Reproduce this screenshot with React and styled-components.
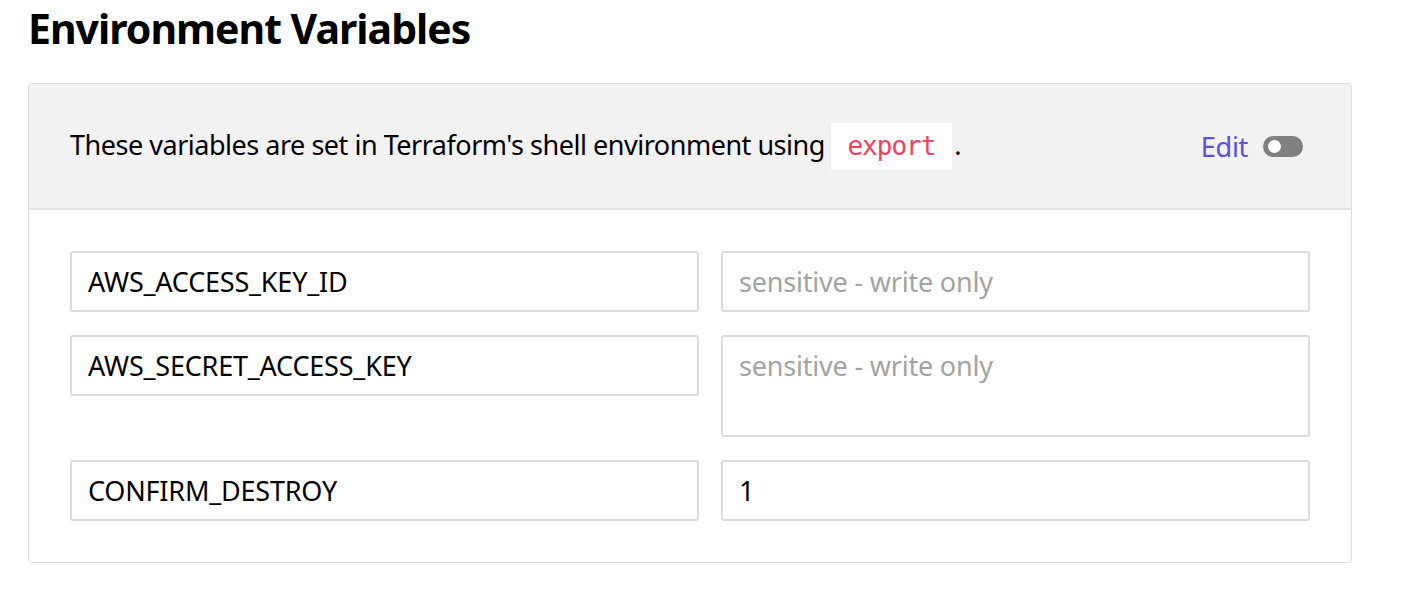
import React from "react";
import styled, { createGlobalStyle } from "styled-components";

const GlobalStyle = createGlobalStyle`
  body {
    margin: 0;
    background: #fff;
    font-family: "Noto Sans", "Open Sans", sans-serif;
    color: #000;
  }
`;

const vars = [
  { name: "AWS_ACCESS_KEY_ID", placeholder: "sensitive - write only" },
  { name: "AWS_SECRET_ACCESS_KEY", placeholder: "sensitive - write only", multiline: true },
  { name: "CONFIRM_DESTROY", value: "1" },
];

export default function App() {
  return (
    <Page>
      <GlobalStyle />
      <Title>Environment Variables</Title>
      <Card>
        <Header>
          <Intro>
            These variables are set in Terraform's shell environment using <Code>export</Code>.
          </Intro>
          <EditWrap>
            <EditLabel>Edit</EditLabel>
            <Toggle />
          </EditWrap>
        </Header>
        <Body>
          {vars.map((v) => (
            <Row key={v.name}>
              <Field readOnly value={v.name} />
              {v.multiline ? (
                <Area readOnly placeholder={v.placeholder} />
              ) : (
                <Field readOnly value={v.value || ""} placeholder={v.placeholder} />
              )}
            </Row>
          ))}
        </Body>
      </Card>
    </Page>
  );
}

const Page = styled.div`
  padding: 0 59px 0 28px;
`;

const Title = styled.h1`
  margin: 0;
  padding-top: 3px;
  height: 80px;
  font-size: 41px;
  font-weight: 700;
  line-height: 50px;
  letter-spacing: -1px;
`;

const Card = styled.div`
  border: 1px solid #dedede;
  border-radius: 3px;
`;

const Header = styled.div`
  display: flex;
  align-items: center;
  justify-content: space-between;
  height: 124px;
  padding: 0 48px 0 41px;
  background: #f2f2f2;
  border-bottom: 2px solid #e2e2e2;
`;

const Intro = styled.p`
  margin: 0;
  font-size: 27px;
  letter-spacing: -0.48px;
`;

const Code = styled.code`
  display: inline-block;
  padding: 8px 17px 8px 16px;
  margin: 0 2px 0 0;
  background: #fff;
  color: #f43f5e;
  font-family: "DejaVu Sans Mono", monospace;
  font-size: 26px;
  line-height: 31px;
  letter-spacing: -1px;
`;

const EditWrap = styled.div`
  display: flex;
  align-items: center;
  gap: 15px;
`;

const EditLabel = styled.span`
  color: #5a4fe0;
  font-size: 27px;
  letter-spacing: -0.3px;
`;

const Toggle = styled.span`
  position: relative;
  display: inline-block;
  width: 40px;
  height: 21px;
  border-radius: 11px;
  background: #808080;

  &::after {
    content: "";
    position: absolute;
    left: 5px;
    top: 4px;
    width: 13px;
    height: 13px;
    border-radius: 50%;
    background: #fff;
  }
`;

const Body = styled.div`
  display: flex;
  flex-direction: column;
  gap: 23px;
  padding: 41px;
`;

const Row = styled.div`
  display: grid;
  grid-template-columns: 629px 1fr;
  gap: 22px;
  align-items: start;
`;

const fieldBase = `
  box-sizing: border-box;
  width: 100%;
  margin: 0;
  padding: 0 16px;
  border: 2px solid #dcdcdc;
  border-radius: 3px;
  background: #fff;
  color: #000;
  font-family: "Noto Sans", "Open Sans", sans-serif;
  font-size: 27px;
  letter-spacing: -0.2px;
  outline: none;

  &::placeholder {
    color: #a3a3a3;
  }
`;

const Field = styled.input`
  ${fieldBase}
  height: 61px;
`;

const Area = styled.textarea`
  ${fieldBase}
  display: block;
  height: 102px;
  padding-top: 10px;
  line-height: 37px;
  resize: none;
`;
